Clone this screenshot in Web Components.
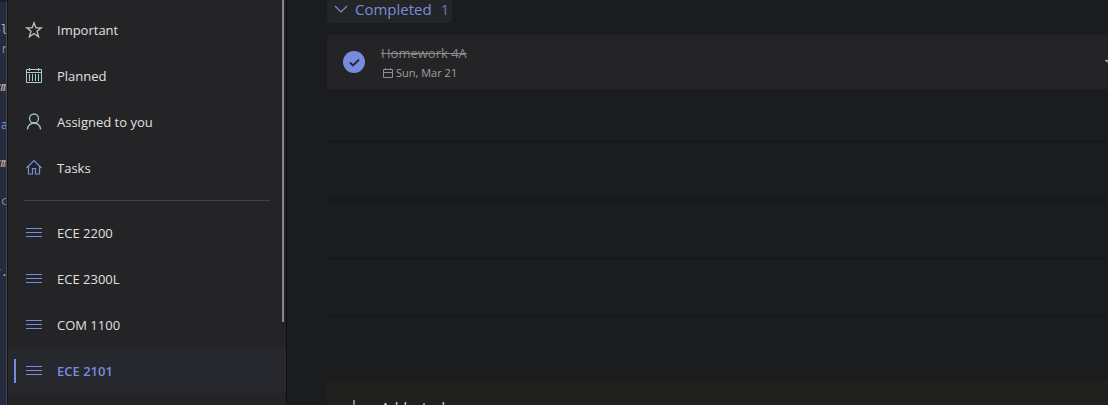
<!DOCTYPE html>
<html lang="en">
<head>
<meta charset="utf-8">
<title>Tasks</title>
<style>
  html, body { margin: 0; height: 100%; overflow: hidden; background: #1b1c1e; }
  body { font-family: "Open Sans", "Noto Sans", sans-serif; font-size: 13px; color: #e0e0e0; }
</style>
</head>
<body>
<todo-app></todo-app>
<script>
const define = (name, html, setup) => customElements.define(name, class extends HTMLElement {
  connectedCallback() {
    if (this.shadowRoot) return;
    const t = document.createElement('template');
    t.innerHTML = html;
    this.attachShadow({ mode: 'open' }).append(t.content.cloneNode(true));
    if (setup) setup(this, this.shadowRoot);
  }
});

const icons = {
  star: '<path stroke="#c4bcb9" stroke-width="1.3" d="M9 1.800L10.900 6.800H16.200L12 10.200L13.600 15.800L9 12.500L4.400 15.800L6 10.200L1.800 6.800H7.100Z"/>',
  calendar: '<path stroke="#9fd3cc" d="M1.5 2.5h15v13h-15zM1.5 5.5h15M4.5 1v3M13.5 1v3M4.5 7v7M7.5 7v7M10.5 7v7M13.5 7v7"/>',
  person: '<g stroke="#a3c4bc" stroke-width="1.3"><circle cx="9" cy="5.500" r="4.500"/><path d="M2.500 16.500c0-4 3-6.500 6.500-6.500s6.500 2.500 6.500 6.500"/></g>',
  home: '<path stroke="#788cde" stroke-width="1.2" d="M1.500 9L9 1.500L16.500 9M3.500 7.500v7.500h4V9.500h3v5.500h4V7.500"/>',
  list: '<path stroke="#788cde" d="M1 4.500h16M1 8.500h16M1 12.500h16"/>'
};

define('code-edge', `
  <style>
    :host { display: block; overflow: hidden; background: #262a3d; border-right: 1px solid #46474c; border-top: 2px solid #1c1c1e; box-sizing: border-box; }
    pre { margin: 0 -2px 0 0; padding-top: 19px; font: 12px/19px "DejaVu Sans Mono", "Liberation Mono", monospace; color: #a39a96; display: flex; flex-direction: column; align-items: flex-end; }
    span { height: 19px; }
    .gap { height: 52px; }
    .blue { color: #7489dc; } .it { font-style: italic; font-weight: bold; color: #b8a39a; } .light { color: #a8b6b6; } .dim { color: #858b96; } .tan { color: #92827e; }
  </style>
  <pre><span class="light">ol</span><span class="dim">tr</span><span></span><span class="it">rm</span><span></span><span class="blue">ta</span><span></span><span class="it">rm</span><span></span><span class="tan">sc</span><span class="gap"></span><span class="light">r.</span></pre>`);

define('nav-item', `
  <style>
    :host { display: block; }
    a { display: flex; align-items: center; height: 44px; padding-left: 6px; color: inherit; text-decoration: none; line-height: 18px; }
    .bar { width: 2px; height: 24px; margin-right: 9px; }
    svg { width: 18px; height: 18px; margin-right: 14px; fill: none; }
    :host([selected]) a { background: #27282e; color: #788cde; font-weight: 600; }
    :host([selected]) .bar { background: #788cde; }
  </style>
  <a href="#"><span class="bar"></span><svg viewBox="0 0 18 18" aria-hidden="true"></svg><slot></slot></a>`,
  (el, root) => {
    root.querySelector('svg').innerHTML = icons[el.getAttribute('icon')];
    if (el.hasAttribute('selected')) root.querySelector('a').setAttribute('aria-current', 'page');
  });

define('side-nav', `
  <style>
    :host { display: grid; grid-template-columns: 1fr; background: #242426; border-left: 1px solid #141416; border-right: 1px solid #101012; box-sizing: border-box; position: relative; }
    nav { display: flex; flex-direction: column; gap: 2px; padding-top: 8px; }
    hr { width: auto; height: 1px; margin: 8px 16px; background: #424244; border: 0; align-self: stretch; }
    .thumb { position: absolute; top: 0; right: 2px; width: 2px; height: 80vh; max-height: 322px; background: #88888a; }
  </style>
  <nav><slot></slot><hr><slot name="lists"></slot></nav><div class="thumb"></div>`);

define('group-toggle', `
  <style>
    :host { display: flex; }
    button { display: flex; align-items: center; height: 23px; padding: 0 7px 6px; border: 0; border-radius: 0 0 4px 4px; background: #242527; color: #788cde; font: inherit; font-size: 15px; line-height: 16px; }
    svg { width: 14px; height: 14px; margin-right: 7px; fill: none; stroke: #788cde; stroke-width: 1.200; }
    .count { margin-left: 9px; margin-right: -4px; color: #6576ba; }
  </style>
  <button type="button" aria-expanded="true"><svg viewBox="0 0 14 14" aria-hidden="true"><path d="M1 4l6 6 6-6"/></svg><slot></slot><span class="count"><slot name="count"></slot></span></button>`);

define('task-card', `
  <style>
    :host { display: flex; align-items: center; height: 54px; box-sizing: border-box; padding-left: 16px; border-radius: 4px 0 0 4px; background: #242426; overflow: hidden; }
    input { appearance: none; flex: none; width: 22px; height: 22px; margin: 0 16px 0 0; border-radius: 50%; background: #788cde; }
    label { position: relative; display: flex; }
    label svg { position: absolute; left: 6px; top: 6px; width: 11px; height: 11px; fill: none; stroke: #242638; stroke-width: 1.800; }
    .text { flex: 1; padding-top: 2px; }
    .title { color: #8c8c8c; text-decoration: line-through; line-height: 20px; }
    .due { display: flex; align-items: center; gap: 3px; color: #a0a0a0; font-size: 11px; line-height: 20px; padding-left: 2px; }
    .due svg { width: 10px; height: 10px; fill: none; stroke: #8d8d8d; }
    .star { flex: none; width: 3px; height: 18px; overflow: hidden; fill: none; stroke: #b5b5b5; }
  </style>
  <label><input type="checkbox" checked aria-label="Homework 4A"><svg viewBox="0 0 11 11" aria-hidden="true"><path d="M1 5.500l3 3L10 2.500"/></svg></label>
  <div class="text"><div class="title"><slot></slot></div>
  <div class="due"><svg viewBox="0 0 10 10" aria-hidden="true"><path d="M.5 1.500h9v8h-9zM.5 4.500h9M2.500 0v2M7.500 0v2"/></svg><slot name="due"></slot></div></div>
  <svg class="star" viewBox="0 0 3 18" aria-hidden="true"><path d="M0 7.500h6M0 7l6 5"/></svg>`);

define('empty-rows', `
  <style>
    :host { display: block; padding-top: 52px; }
    div { height: 56px; border-top: 2px solid #17181a; }
  </style>
  <div></div><div></div><div></div><div></div>`);

define('add-task', `
  <style>
    :host { display: block; margin-top: 8px; }
    button { display: flex; align-items: center; width: 100%; height: 52px; padding: 0 0 0 20px; border: 0; border-radius: 4px 0 0 4px; background: #20201f; color: #e0e0e0; font: inherit; font-size: 14px; text-align: left; }
    svg { width: 14px; height: 14px; margin-right: 20px; stroke: #858585; stroke-width: 2; }
  </style>
  <button type="button"><svg viewBox="0 0 14 14" aria-hidden="true"><path d="M7 0v14M0 7h14"/></svg><slot></slot></button>`);

define('todo-app', `
  <style>
    :host { display: grid; grid-template-columns: 7px 280px minmax(0, 1fr); height: 100vh; overflow: hidden; }
    main { display: flex; flex-direction: column; padding-left: 40px; min-height: 0; overflow: hidden; }
    task-card { margin-top: 12px; flex: none; }
    group-toggle, empty-rows, add-task { flex: none; }
  </style>
  <code-edge></code-edge>
  <side-nav>
    <nav-item icon="star">Important</nav-item>
    <nav-item icon="calendar">Planned</nav-item>
    <nav-item icon="person">Assigned to you</nav-item>
    <nav-item icon="home">Tasks</nav-item>
    <nav-item slot="lists" icon="list">ECE 2200</nav-item>
    <nav-item slot="lists" icon="list">ECE 2300L</nav-item>
    <nav-item slot="lists" icon="list">COM 1100</nav-item>
    <nav-item slot="lists" icon="list" selected>ECE 2101</nav-item>
  </side-nav>
  <main>
    <group-toggle>Completed<span slot="count">1</span></group-toggle>
    <task-card>Homework 4A<span slot="due">Sun, Mar 21</span></task-card>
    <empty-rows></empty-rows>
    <add-task>Add a task</add-task>
  </main>`);
</script>
</body>
</html>
